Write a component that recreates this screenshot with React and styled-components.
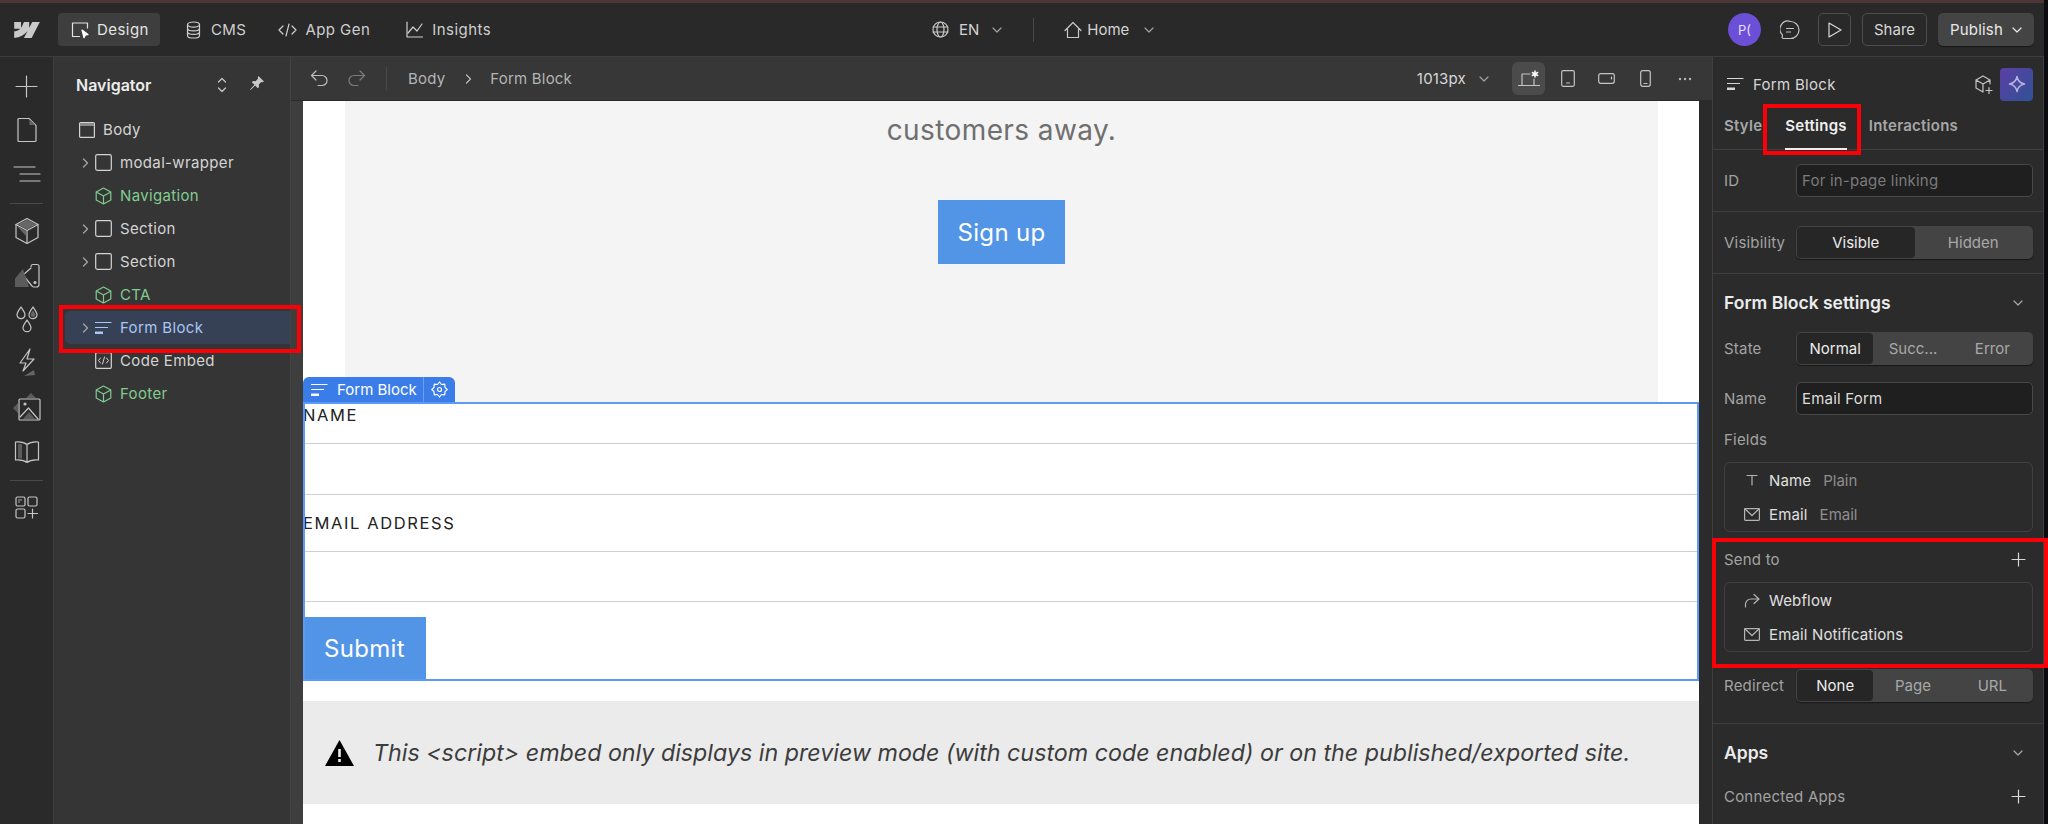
import React from 'react';
import styled, { createGlobalStyle } from 'styled-components';

/* Global */
const GlobalStyle = createGlobalStyle`
  html, body { margin: 0; padding: 0; background: #0c0c10; }
  body { font-family: Inter, "Liberation Sans", sans-serif; }
  * { box-sizing: border-box; }
`;

/* Shell */
const Root = styled.div`
  position: relative;
  display: flex;
  width: 2048px;
  height: 824px;
  overflow: hidden;
  font-size: 15px;
  color: #d8d8d8;
`;
const Main = styled.div`
  flex: 1;
  min-width: 0;
  display: flex;
  flex-direction: column;
`;
const EdgeStrip = styled.div`
  width: 4px;
  background: #0c0c10;
`;
const TopStrip = styled.div`
  height: 3px;
  background: #4c3636;
`;
const Highlight = styled.div`
  position: absolute;
  left: ${p => p.$x}px;
  top: ${p => p.$y}px;
  width: ${p => p.$w}px;
  height: ${p => p.$h}px;
  border: 4px solid #fb0007;
  pointer-events: none;
`;

/* Top bar */
const TopBar = styled.header`
  position: relative;
  height: 54px;
  flex-shrink: 0;
  display: flex;
  align-items: center;
  justify-content: space-between;
  padding: 0 10px 0 14px;
  background: #292929;
  border-bottom: 1px solid #3d3d3d;
`;
const TopGroup = styled.div`
  display: flex;
  align-items: center;
`;
const ModeButton = styled.div`
  height: 33px;
  display: flex;
  align-items: center;
  gap: ${p => p.$gap || 8}px;
  padding: 0 11px 0 13px;
  margin-right: ${p => p.$mr || 0}px;
  border-radius: 4px;
  color: ${p => (p.$active ? '#e4e4e4' : '#cfcfcf')};
  background: ${p => (p.$active ? '#3e3e3e' : 'transparent')};
  letter-spacing: 0.45px;
`;
const LogoWrap = styled.div`
  width: 44px;
  display: flex;
  align-items: center;
`;
const CenterGroup = styled.div`
  position: absolute;
  left: 932px;
  top: 0;
  bottom: 0;
  display: flex;
  align-items: center;
  color: #d4d4d4;
`;
const Rule = styled.div`
  width: 1px;
  height: 24px;
  margin: 0 ${p => p.$mr || 0}px 0 ${p => p.$ml || 0}px;
  background: #484848;
`;
const Avatar = styled.div`
  width: 33px;
  height: 33px;
  border-radius: 50%;
  background: #6b4fd6;
  display: flex;
  align-items: center;
  justify-content: center;
  font-size: 13px;
  color: #e6e0ff;
  margin-right: 19px;
`;
const ChatWrap = styled.div`
  display: flex;
  margin-right: 18px;
  color: #c4c4c4;
`;
const OutlineButton = styled.div`
  height: 33px;
  width: ${p => p.$w}px;
  margin-right: 11px;
  display: flex;
  align-items: center;
  justify-content: center;
  border: 1px solid #4e4e4e;
  border-radius: 5px;
  color: #d8d8d8;
`;
const PublishButton = styled.div`
  width: 96px;
  height: 33px;
  display: flex;
  align-items: center;
  justify-content: center;
  gap: 9px;
  background: #444;
  border-radius: 5px;
  color: #e8e8e8;
  letter-spacing: 0.2px;
  box-shadow: 0 1px 1px #161616;
`;

/* Body */
const Workspace = styled.div`
  flex: 1;
  min-height: 0;
  display: flex;
`;

/* Left rail */
const Rail = styled.nav`
  width: 54px;
  flex-shrink: 0;
  padding-top: 7px;
  background: #2a2a2a;
  border-right: 1px solid #3f3f3f;
  display: flex;
  flex-direction: column;
  align-items: center;
`;
const RailItem = styled.div`
  width: 100%;
  height: 44.2px;
  display: flex;
  align-items: center;
  justify-content: center;
  color: #c6c6c6;
`;
const RailRule = styled.div`
  width: 33px;
  height: 1px;
  margin: 6px 0 5px;
  background: #4a4a4a;
`;

/* Navigator */
const Navigator = styled.aside`
  width: 237px;
  flex-shrink: 0;
  background: #353535;
  border-right: 1px solid #434343;
`;
const NavHeader = styled.div`
  height: 56px;
  display: flex;
  align-items: center;
  padding-left: 22px;
  color: #c8c8c8;
`;
const NavTitle = styled.div`
  width: 141px;
  font-size: 16px;
  font-weight: 600;
  color: #ececec;
`;
const NavRow = styled.div`
  height: 33px;
  margin-left: 11px;
  display: flex;
  align-items: center;
  padding-left: ${p => p.$indent}px;
  color: ${p => p.$color || '#d4d4d4'};
  background: ${p => (p.$selected ? '#374155' : 'transparent')};
  border-radius: 5px 0 0 5px;
`;
const Caret = styled.div`
  width: 20px;
  display: flex;
  justify-content: center;
  color: #a8a8a8;
`;
const NavLabel = styled.span`
  margin-left: 8px;
  letter-spacing: 0.35px;
`;

/* Center */
const Center = styled.main`
  flex: 1;
  min-width: 0;
  display: flex;
  flex-direction: column;
`;
const CanvasBar = styled.div`
  position: relative;
  height: 44px;
  flex-shrink: 0;
  display: flex;
  align-items: center;
  padding-left: 19px;
  background: #373737;
  border-bottom: 1px solid #2a2a2a;
  color: #bdbdbd;
`;
const BarRight = styled.div`
  margin-left: auto;
  display: flex;
  align-items: center;
`;
const Crumb = styled.span`
  color: #b4b4b4;
  letter-spacing: 0.2px;
`;
const DeviceButton = styled.div`
  width: 33px;
  height: 33px;
  margin-right: ${p => p.$mr || 0}px;
  display: flex;
  align-items: center;
  justify-content: center;
  border-radius: 6px;
  color: #c4c4c4;
  background: ${p => (p.$active ? '#4b4b4b' : 'transparent')};
`;
const CanvasFrame = styled.div`
  flex: 1;
  min-height: 0;
  display: flex;
  background: linear-gradient(90deg, #3e3e3e 0 12px, #2b2b2b 12px);
  padding: 0 13px 0 12px;
`;
const Page = styled.div`
  flex: 1;
  min-width: 0;
  background: #fff;
  overflow: hidden;
`;
const Hero = styled.section`
  height: 301px;
  margin: 0 41px 0 42px;
  padding-top: 11px;
  background: #f4f4f4;
  display: flex;
  flex-direction: column;
  align-items: center;
`;
const HeroText = styled.div`
  font-size: 28px;
  line-height: 36px;
  letter-spacing: 0.4px;
  color: #6f6f6f;
`;
const Cta = styled.div`
  height: ${p => p.$h}px;
  width: ${p => p.$w}px;
  margin-top: ${p => p.$mt || 0}px;
  display: flex;
  align-items: center;
  justify-content: center;
  background: #5295e6;
  color: #fff;
  font-size: 24px;
  letter-spacing: 0.3px;
`;
const FormBlock = styled.div`
  position: relative;
  height: 279px;
  outline: 2px solid #5c9af5;
  outline-offset: -2px;
`;
const BlockTag = styled.div`
  position: absolute;
  left: 0;
  top: -25px;
  height: 25px;
  display: flex;
  align-items: center;
  border-radius: 6px 6px 0 0;
  background: #3b7de8;
  color: #fff;
`;
const TagName = styled.div`
  display: flex;
  align-items: center;
  gap: 9px;
  width: 121px;
  height: 100%;
  padding-left: 8px;
  border-right: 1px solid #6e9eee;
  white-space: nowrap;
`;
const TagGear = styled.div`
  width: 31px;
  display: flex;
  justify-content: center;
`;
const FieldLabel = styled.div`
  height: 41px;
  padding: 3px 0 0 0;
  font-size: 16.5px;
  line-height: 20px;
  letter-spacing: 1.6px;
  color: #222;
`;
const FieldInput = styled.div`
  height: 51.5px;
  margin-bottom: 15px;
  border-top: 1.5px solid #cfcfcf;
  border-bottom: 1.5px solid #cfcfcf;
`;
const Notice = styled.div`
  height: 103px;
  margin-top: 20px;
  padding-left: 22px;
  display: flex;
  align-items: center;
  gap: 19px;
  background: #ebebeb;
`;
const NoticeText = styled.div`
  font-size: 23.25px;
  font-style: italic;
  color: #3c3c3c;
  white-space: nowrap;
`;

/* Right panel */
const Panel = styled.aside`
  width: 332px;
  flex-shrink: 0;
  background: #2b2b2b;
  border-left: 1px solid #3f3f3f;
  border-right: 1px solid #3f3f3f;
`;
const PanelHeader = styled.div`
  height: 54px;
  display: flex;
  align-items: center;
  padding: 0 10px 0 14px;
  color: #d6d6d6;
`;
const PanelTitle = styled.div`
  margin-left: 9px;
  letter-spacing: 0.3px;
`;
const HeaderCube = styled.div`
  margin-left: auto;
  display: flex;
  margin-right: 7px;
  color: #c4c4c4;
`;
const AiButton = styled.div`
  width: 33px;
  height: 33px;
  display: flex;
  align-items: center;
  justify-content: center;
  border-radius: 4px;
  background: linear-gradient(135deg, #5c3fa6, #2f5294);
  color: #b9b2dd;
`;
const Tabs = styled.div`
  height: 39px;
  display: flex;
  padding-left: 11px;
  border-bottom: 1px solid #3f3f3f;
`;
const Tab = styled.div`
  height: 39px;
  margin-right: ${p => p.$mr}px;
  padding-top: 5px;
  font-weight: 600;
  letter-spacing: 0.25px;
  color: ${p => (p.$active ? '#efefef' : '#a6a6a6')};
  border-bottom: 2px solid ${p => (p.$active ? '#efefef' : 'transparent')};
`;
const Section = styled.div`
  padding: ${p => p.$pad || '14px 10px 14px 11px'};
  border-bottom: ${p => (p.$flat ? 'none' : '1px solid #3f3f3f')};
`;
const Row = styled.div`
  display: flex;
  align-items: center;
  justify-content: space-between;
  min-height: ${p => p.$h || 33}px;
  margin-top: ${p => p.$mt || 0}px;
`;
const RowLabel = styled.div`
  color: #a3a3a3;
  letter-spacing: 0.2px;
`;
const Heading = styled.div`
  color: #ececec;
  font-weight: 600;
  font-size: 17.5px;
`;
const TextField = styled.div`
  width: 237px;
  height: 33px;
  display: flex;
  align-items: center;
  padding-left: 5px;
  border: 1px solid #484848;
  border-radius: 5px;
  background: #1f1f1f;
  color: ${p => (p.$placeholder ? '#7b7b7b' : '#dedede')};
  letter-spacing: 0.2px;
`;
const Segmented = styled.div`
  width: 237px;
  height: 33px;
  padding: 1px;
  display: grid;
  grid-template-columns: ${p => p.$cols};
  border-radius: 5px;
  background: #444;
  box-shadow: 0 1px 1px #181818;
`;
const Segment = styled.div`
  display: flex;
  align-items: center;
  justify-content: center;
  border-radius: 4px;
  color: ${p => (p.$active ? '#ececec' : '#a8a8a8')};
  background: ${p => (p.$active ? '#262626' : 'transparent')};
`;
const ListBox = styled.div`
  margin-top: 13px;
  border: 1px solid #404040;
  border-radius: 6px;
`;
const ListRow = styled.div`
  height: 34px;
  display: flex;
  align-items: center;
  color: #e0e0e0;
`;
const ListIcon = styled.div`
  width: 20px;
  margin-left: 17px;
  display: flex;
  justify-content: center;
  color: #b4b4b4;
`;
const ListName = styled.span`
  margin-left: 7px;
  letter-spacing: 0.15px;
`;
const ListKind = styled.span`
  margin-left: 12px;
  color: #8f8f8f;
`;
const IconSlot = styled.div`
  display: flex;
  margin-right: ${p => p.$mr || 8}px;
  color: #c8c8c8;
`;

/* Icons */
const Svg = styled.svg`
  display: block;
  flex-shrink: 0;
  fill: none;
  stroke: currentColor;
  stroke-width: 1.2;
  stroke-linecap: round;
  stroke-linejoin: round;
`;
const Icon = ({ w = 16, h = 16, children }) => (
  <Svg width={w} height={h} viewBox={`0 0 ${w} ${h}`}>{children}</Svg>
);

const Logo = () => (
  <svg width="26" height="16" viewBox="0 0 1080 674" fill="#c9c9c9">
    <path d="M1080 0L735.4 673.7H411.7L555.9 394.5H549.4C430.5 548.9 252.9 650.6 0 673.7V398.3C0 398.3 161.8 388.8 256.9 288.8H0V0H288.8V237.5L295.3 237.5L413.3 0H631.6V236L638.1 236L760.6 0H1080Z" />
  </svg>
);
const DesignIcon = () => (
  <Icon w={18} h={18}>
    <path d="M16.5 7V2H1.5v13.5h7" />
    <path d="M11 9l6 4.6-2.6.4-1.4 2.8z" fill="#fff" stroke="#fff" />
  </Icon>
);
const CmsIcon = () => (
  <Icon w={15} h={18}>
    <ellipse cx="7.5" cy="3.6" rx="6" ry="2.6" />
    <path d="M1.5 3.6v10.8c0 1.4 2.7 2.6 6 2.6s6-1.2 6-2.6V3.6" />
    <path d="M1.5 7.2c0 1.4 2.7 2.6 6 2.6s6-1.2 6-2.6M1.5 10.8c0 1.4 2.7 2.6 6 2.6s6-1.2 6-2.6" />
  </Icon>
);
const CodeIcon = () => (
  <Icon w={19} h={16}>
    <path d="M5 4L1 8l4 4M14 4l4 4-4 4M11 2L8 14" />
  </Icon>
);
const ChartIcon = () => (
  <Icon w={17} h={17}>
    <path d="M1 1v15h15.5" />
    <path d="M2 12l5-6 4 4 5-7" />
  </Icon>
);
const Chevron = ({ color }) => (
  <Svg width="10" height="6" viewBox="0 0 10 6" style={color ? { color } : undefined}>
    <path d="M1 1l4 4 4-4" />
  </Svg>
);
const GlobeIcon = () => (
  <Icon w={17} h={17}>
    <circle cx="8.5" cy="8.5" r="7.5" />
    <ellipse cx="8.5" cy="8.5" rx="3.5" ry="7.5" />
    <path d="M1 6h15M1 11h15" />
  </Icon>
);
const HomeIcon = () => (
  <Icon w={18} h={18}>
    <path d="M1 9.5L9 1.5l8 8M3.5 8v8.5h11V8" />
  </Icon>
);
const ChatIcon = () => (
  <Icon w={20} h={20}>
    <path d="M10.5 1.5a8 8 0 0 1 0 17H3.5a1.5 1.5 0 0 1-1.2-2.3c.3-.5.2-1-.1-1.6a8 8 0 0 1 8.3-13.1z" />
    <path d="M6.5 8.5h7M6.5 12h4" />
  </Icon>
);
const PlayIcon = () => (
  <Icon w={16} h={18}>
    <path d="M2 2l12 7-12 7z" />
  </Icon>
);
const PlusIcon = ({ size = 17 }) => (
  <Icon w={size} h={size}>
    <path d={`M${size / 2} 1v${size - 2}M1 ${size / 2}h${size - 2}`} />
  </Icon>
);
const PageIcon = () => (
  <Icon w={22} h={26}>
    <path d="M3 1.5h10l7 7v15a1 1 0 0 1-1 1H3a1 1 0 0 1-1-1v-21a1 1 0 0 1 1-1z" />
    <path d="M13.5 2l6 6h-6z" fill="#666" stroke="none" />
  </Icon>
);
const OutlineIcon = () => (
  <Icon w={28} h={18}>
    <path d="M1 2h21M7 9h20M7 16h20" />
  </Icon>
);
const BoxIcon = () => (
  <Icon w={26} h={28}>
    <path d="M13 1.5l11 6v13l-11 6-11-6v-13z" />
    <path d="M2 7.5l11 6 11-6M13 13.5v13" />
    <path d="M13 2.5l9.5 5-9.5 5-9.5-5zM2.800 9l9.5 5.2v5z" fill="#666" stroke="none" />
  </Icon>
);
const SwatchIcon = () => (
  <Icon w={26} h={26}>
    <path d="M17 4.5a2 2 0 0 1 2-2h4a2 2 0 0 1 2 2v18a2.5 2.5 0 0 1-2.500 2.5H20a2.500 2.500 0 0 1-2-1l-9-11 8-7" />
    <path d="M9 7L1 16.5V25h14z" fill="#5c5c5c" stroke="none" />
    <circle cx="21" cy="20.5" r="1" fill="currentColor" />
  </Icon>
);
const DropsIcon = () => (
  <Icon w={24} h={28}>
    <path d="M6 2c2.5 3.5 4 5.4 4 7.7a4 4 0 0 1-8 0C2 7.4 3.5 5.5 6 2zM18 2c2.5 3.5 4 5.4 4 7.7a4 4 0 0 1-8 0c0-2.3 1.5-4.2 4-7.7zM12 15c2.5 3.5 4 5.4 4 7.7a4 4 0 0 1-8 0c0-2.3 1.5-4.2 4-7.7z" />
    <path d="M18 5.5c1.5 2 2.3 3 2.3 4.2a2.3 2.3 0 0 1-4.600 0c0-1.2.8-2.2 2.3-4.2z" fill="#666" stroke="none" />
  </Icon>
);
const BoltIcon = () => (
  <Icon w={20} h={30}>
    <path d="M13 1L3 15h6l-3 8 11-12h-7z" />
    <path d="M7 28l10-6 1 5z" fill="#666" stroke="none" />
  </Icon>
);
const ImageIcon = () => (
  <Icon w={30} h={28}>
    <path d="M19 0l5 5H14zM1 15l5-5v10z" fill="#5c5c5c" stroke="none" />
    <rect x="7" y="6" width="21" height="21" rx="1" />
    <path d="M8 24l8.5-9 9.5 11" />
    <path d="M11 26l6-7 6 7z" fill="#5c5c5c" stroke="none" />
    <circle cx="13" cy="11" r="1" fill="currentColor" />
  </Icon>
);
const BookIcon = () => (
  <Icon w={26} h={24}>
    <path d="M13 4.5C10.5 2.5 6 1.500 1.500 2v18c4.500-.5 9 .5 11.500 2.500 2.500-2 7-3 11.500-2.500V2C20 1.500 15.500 2.500 13 4.500zM13 4.500v18" />
    <path d="M4 4h4v14.500H4z" fill="#5c5c5c" stroke="none" />
  </Icon>
);
const AppsIcon = () => (
  <Icon w={23} h={23}>
    <rect x="1" y="1" width="9" height="9" rx="1.5" />
    <rect x="13" y="1" width="9" height="9" rx="1.5" />
    <rect x="1" y="13" width="9" height="9" rx="1.5" />
    <path d="M17.5 13v9M13 17.5h9.5" />
    <path d="M3 3h4v2H5v2H3z" fill="#666" stroke="none" />
  </Icon>
);
const UpDownIcon = () => (
  <Icon w={10} h={16}>
    <path d="M1.5 5L5 1.5 8.5 5M1.5 11L5 14.5 8.5 11" />
  </Icon>
);
const PinIcon = () => (
  <svg width="16" height="16" viewBox="0 0 16 16" fill="#c8c8c8">
    <path d="M9.5 1L15 6.5l-1.5.8-1.2-.3L9.8 9.5l.2 2.500-1.200 1.200-2.600-2.800L1.500 15 1 14.500l4.500-4.800L2.800 7.200 4 6l2.500.2L9 3.700l-.3-1.200z" />
  </svg>
);
const BodyIcon = () => (
  <Icon w={16} h={16}>
    <rect x="0.6" y="0.6" width="14.8" height="14.8" rx="1" />
    <path d="M1 1h14v3H1z" fill="#8a8a8a" stroke="none" />
  </Icon>
);
const SquareIcon = () => (
  <Icon w={17} h={17}>
    <rect x="0.7" y="0.7" width="15.6" height="15.6" rx="1.5" />
  </Icon>
);
const CubeIcon = () => (
  <Svg width="17" height="18" viewBox="0 0 17 18" style={{ color: '#7fcc8e' }}>
    <path d="M8.5 1l7.3 4v8l-7.3 4-7.3-4V5zM1.200 5l7.300 4 7.300-4M8.500 9v8" />
  </Svg>
);
const FormIcon = () => (
  <Svg width="17" height="14" viewBox="0 0 17 14">
    <path d="M0 1.5h16.5M0 6.5h13" strokeLinecap="butt" />
    <path d="M0 10.5h8V13H0z" fill="currentColor" stroke="none" />
  </Svg>
);
const EmbedIcon = () => (
  <Icon w={17} h={17}>
    <rect x="0.7" y="0.7" width="15.6" height="15.6" rx="1" />
    <path d="M5.5 6L3.500 8.500 5.500 11M11.500 6l2 2.500-2 2.500M9.500 5l-2 7" strokeWidth="1" />
  </Icon>
);
const GearIcon = () => (
  <Icon w={17} h={17}>
    <path d="M8.5 1l2 2.500 3.200-.3.300 3.200L16.200 8.500 14 10.600l-.3 3.200-3.200-.3-2 2.500-2-2.500-3.200.3-.3-3.200L.800 8.500 3 6.400l.3-3.200 3.200.3z" />
    <circle cx="8.5" cy="8.5" r="2" />
  </Icon>
);
const WarningIcon = () => (
  <svg width="29" height="26" viewBox="0 0 29 26">
    <path d="M14.5 0L29 26H0z" fill="#000" />
    <path d="M13.2 9h2.600v8h-2.600zM13.200 19h2.600v3h-2.600z" fill="#ebebeb" />
  </svg>
);
const UndoIcon = () => (
  <Icon w={18} h={17}>
    <path d="M6 1L1.500 5.500 6 10M2 5.500h10a4.500 4.500 0 0 1 0 10H8" />
  </Icon>
);
const RedoIcon = () => (
  <Svg width="18" height="17" viewBox="0 0 18 17" style={{ color: '#7c7c7c' }}>
    <path d="M12 1l4.500 4.500L12 10M16 5.500H6a4.500 4.500 0 0 0 0 10h4" />
  </Svg>
);
const LaptopStarIcon = () => (
  <Icon w={22} h={17}>
    <path d="M12 4H4v11M0.500 15.500h21M16 9v6" />
    <path d="M17 1v6M14.300 2.500l5.400 3M19.700 2.500l-5.400 3" strokeWidth="1.500" stroke="#fff" />
  </Icon>
);
const TabletIcon = () => (
  <Icon w={14} h={17}>
    <rect x="0.7" y="0.7" width="12.6" height="15.6" rx="1.5" />
    <path d="M5.5 13h3" />
  </Icon>
);
const LandscapeIcon = () => (
  <Icon w={17} h={11}>
    <rect x="0.7" y="0.7" width="15.6" height="9.6" rx="2" />
    <path d="M13.5 4v2" />
  </Icon>
);
const PhoneIcon = () => (
  <Icon w={11} h={17}>
    <rect x="0.7" y="0.7" width="9.6" height="15.6" rx="2" />
    <path d="M4 13.5h3" />
  </Icon>
);
const DotsIcon = () => (
  <svg width="14" height="4" viewBox="0 0 14 4" fill="#b8b8b8">
    <circle cx="2" cy="2" r="1.2" />
    <circle cx="7" cy="2" r="1.2" />
    <circle cx="12" cy="2" r="1.2" />
  </svg>
);
const CubePlusIcon = () => (
  <Icon w={19} h={19}>
    <path d="M9 1l7 4v4M9 1L2 5v8l7 4M2 5l7 4 7-4M9 9v8" />
    <path d="M15 12.5v6M12 15.5h6" />
  </Icon>
);
const SparkleIcon = () => (
  <Icon w={18} h={18}>
    <path d="M9 1.5c.8 4.500 3 6.700 7.500 7.500-4.500.8-6.700 3-7.500 7.500-.8-4.500-3-6.700-7.500-7.500 4.500-.8 6.700-3 7.500-7.500z" strokeWidth="1.5" />
  </Icon>
);
const MailIcon = () => (
  <Icon w={16} h={13}>
    <rect x="0.6" y="0.6" width="14.8" height="11.8" rx="0.8" />
    <path d="M1 1l7 6.5L15 1" />
  </Icon>
);
const TypeIcon = () => (
  <Icon w={12} h={12}>
    <path d="M1 1.5h10M6 1.5V11" />
  </Icon>
);
const ForwardIcon = () => (
  <Icon w={16} h={15}>
    <path d="M10 1.5L15 6l-5 4.500M15 6H7a5.500 5.500 0 0 0-5.500 5.500V14" />
  </Icon>
);
const CaretIcon = () => (
  <Icon w={7} h={10}>
    <path d="M1.5 1l4 4-4 4" />
  </Icon>
);

/* Data */
const navItems = [
  { label: 'modal-wrapper', caret: true, icon: <SquareIcon /> },
  { label: 'Navigation', green: true, icon: <CubeIcon /> },
  { label: 'Section', caret: true, icon: <SquareIcon /> },
  { label: 'Section', caret: true, icon: <SquareIcon /> },
  { label: 'CTA', green: true, icon: <CubeIcon /> },
  { label: 'Form Block', caret: true, selected: true, icon: <FormIcon /> },
  { label: 'Code Embed', icon: <EmbedIcon /> },
  { label: 'Footer', green: true, icon: <CubeIcon /> },
];

const railTop = [<PlusIcon size={23} />, <PageIcon />, <OutlineIcon />];
const railMiddle = [<BoxIcon />, <SwatchIcon />, <DropsIcon />, <BoltIcon />, <ImageIcon />, <BookIcon />];

const rowColor = (item) => {
  if (item.selected) return '#a9c6f5';
  return item.green ? '#82cc91' : undefined;
};

const App = () => (
  <Root>
    <GlobalStyle />
    <Main>
      <TopStrip />
      <TopBar>
        <TopGroup>
          <LogoWrap><Logo /></LogoWrap>
          <ModeButton $active $mr={13}><DesignIcon />Design</ModeButton>
          <ModeButton $mr={8} $gap={10}><CmsIcon />CMS</ModeButton>
          <ModeButton $mr={12}><CodeIcon />App Gen</ModeButton>
          <ModeButton $gap={9}><ChartIcon />Insights</ModeButton>
        </TopGroup>
        <CenterGroup>
          <IconSlot><GlobeIcon /></IconSlot>
          <span style={{ marginLeft: 2 }}>EN</span>
          <div style={{ marginLeft: 13 }}><Chevron color="#a0a0a0" /></div>
          <Rule $ml={31} $mr={30} />
          <IconSlot $mr={5}><HomeIcon /></IconSlot>
          Home
          <div style={{ marginLeft: 15 }}><Chevron color="#a0a0a0" /></div>
        </CenterGroup>
        <TopGroup>
          <Avatar>P(</Avatar>
          <ChatWrap><ChatIcon /></ChatWrap>
          <OutlineButton $w={33}><PlayIcon /></OutlineButton>
          <OutlineButton $w={65}>Share</OutlineButton>
          <PublishButton>Publish<Chevron /></PublishButton>
        </TopGroup>
      </TopBar>

      <Workspace>
        <Rail>
          {railTop.map((icon, i) => <RailItem key={i}>{icon}</RailItem>)}
          <RailRule />
          {railMiddle.map((icon, i) => <RailItem key={i}>{icon}</RailItem>)}
          <RailRule />
          <RailItem><AppsIcon /></RailItem>
        </Rail>

        <Navigator>
          <NavHeader>
            <NavTitle>Navigator</NavTitle>
            <UpDownIcon />
            <div style={{ marginLeft: 22 }}><PinIcon /></div>
          </NavHeader>
          <NavRow $indent={14}>
            <BodyIcon />
            <NavLabel>Body</NavLabel>
          </NavRow>
          {navItems.map((item, i) => (
            <NavRow key={i} $indent={10} $selected={item.selected} $color={rowColor(item)}>
              <Caret>{item.caret && <CaretIcon />}</Caret>
              {item.icon}
              <NavLabel>{item.label}</NavLabel>
            </NavRow>
          ))}
        </Navigator>

        <Center>
          <CanvasBar>
            <UndoIcon />
            <div style={{ marginLeft: 20 }}><RedoIcon /></div>
            <Rule $ml={20} $mr={21} />
            <Crumb>Body</Crumb>
            <div style={{ margin: '0 18px 0 20px' }}><CaretIcon /></div>
            <Crumb>Form Block</Crumb>
            <BarRight>
              <Crumb style={{ color: '#d8d8d8' }}>1013px</Crumb>
              <div style={{ margin: '0 23px 0 13px' }}><Chevron color="#a0a0a0" /></div>
              <DeviceButton $active $mr={6}><LaptopStarIcon /></DeviceButton>
              <DeviceButton $mr={6}><TabletIcon /></DeviceButton>
              <DeviceButton $mr={6}><LandscapeIcon /></DeviceButton>
              <DeviceButton $mr={6}><PhoneIcon /></DeviceButton>
              <DeviceButton $mr={11}><DotsIcon /></DeviceButton>
            </BarRight>
          </CanvasBar>
          <CanvasFrame>
            <Page>
              <Hero>
                <HeroText>customers away.</HeroText>
                <Cta $w={127} $h={64} $mt={52}>Sign up</Cta>
              </Hero>
              <FormBlock>
                <BlockTag>
                  <TagName><FormIcon />Form Block</TagName>
                  <TagGear><GearIcon /></TagGear>
                </BlockTag>
                <FieldLabel>NAME</FieldLabel>
                <FieldInput />
                <FieldLabel>EMAIL ADDRESS</FieldLabel>
                <FieldInput />
                <Cta $w={123} $h={62}>Submit</Cta>
              </FormBlock>
              <Notice>
                <WarningIcon />
                <NoticeText>This &lt;script&gt; embed only displays in preview mode (with custom code enabled) or on the published/exported site.</NoticeText>
              </Notice>
            </Page>
          </CanvasFrame>
        </Center>

        <Panel>
          <PanelHeader>
            <FormIcon />
            <PanelTitle>Form Block</PanelTitle>
            <HeaderCube><CubePlusIcon /></HeaderCube>
            <AiButton><SparkleIcon /></AiButton>
          </PanelHeader>
          <Tabs>
            <Tab $mr={23}>Style</Tab>
            <Tab $active $mr={22}>Settings</Tab>
            <Tab $mr={0}>Interactions</Tab>
          </Tabs>
          <Section>
            <Row>
              <RowLabel>ID</RowLabel>
              <TextField $placeholder>For in-page linking</TextField>
            </Row>
          </Section>
          <Section>
            <Row>
              <RowLabel>Visibility</RowLabel>
              <Segmented $cols="1fr 1fr">
                <Segment $active>Visible</Segment>
                <Segment>Hidden</Segment>
              </Segmented>
            </Row>
          </Section>
          <Section $pad="12px 10px 21px 11px">
            <Row>
              <Heading>Form Block settings</Heading>
              <div style={{ marginRight: 10 }}><Chevron color="#a8a8a8" /></div>
            </Row>
            <Row $mt={13}>
              <RowLabel>State</RowLabel>
              <Segmented $cols="77fr 80fr 80fr">
                <Segment $active>Normal</Segment>
                <Segment>Succ...</Segment>
                <Segment>Error</Segment>
              </Segmented>
            </Row>
            <Row $mt={17}>
              <RowLabel>Name</RowLabel>
              <TextField>Email Form</TextField>
            </Row>
            <Row $mt={14} $h={20}>
              <RowLabel>Fields</RowLabel>
            </Row>
            <ListBox>
              <ListRow>
                <ListIcon><TypeIcon /></ListIcon>
                <ListName>Name</ListName>
                <ListKind>Plain</ListKind>
              </ListRow>
              <ListRow>
                <ListIcon><MailIcon /></ListIcon>
                <ListName>Email</ListName>
                <ListKind>Email</ListKind>
              </ListRow>
            </ListBox>
            <Row $mt={17} $h={20}>
              <RowLabel>Send to</RowLabel>
              <div style={{ marginRight: 7 }}><PlusIcon size={15} /></div>
            </Row>
            <ListBox>
              <ListRow>
                <ListIcon><ForwardIcon /></ListIcon>
                <ListName>Webflow</ListName>
              </ListRow>
              <ListRow>
                <ListIcon><MailIcon /></ListIcon>
                <ListName>Email Notifications</ListName>
              </ListRow>
            </ListBox>
            <Row $mt={17}>
              <RowLabel>Redirect</RowLabel>
              <Segmented $cols="77fr 80fr 80fr">
                <Segment $active>None</Segment>
                <Segment>Page</Segment>
                <Segment>URL</Segment>
              </Segmented>
            </Row>
          </Section>
          <Section $pad="12px 10px 0 11px" $flat>
            <Row>
              <Heading>Apps</Heading>
              <div style={{ marginRight: 10 }}><Chevron color="#a8a8a8" /></div>
            </Row>
            <Row $mt={11}>
              <RowLabel>Connected Apps</RowLabel>
              <div style={{ marginRight: 7 }}><PlusIcon size={15} /></div>
            </Row>
          </Section>
        </Panel>
      </Workspace>
    </Main>
    <EdgeStrip />

    <Highlight $x={59} $y={305} $w={242} $h={48} />
    <Highlight $x={1763} $y={104} $w={98} $h={51} />
    <Highlight $x={1712} $y={538} $w={336} $h={130} />
  </Root>
);

export default App;
